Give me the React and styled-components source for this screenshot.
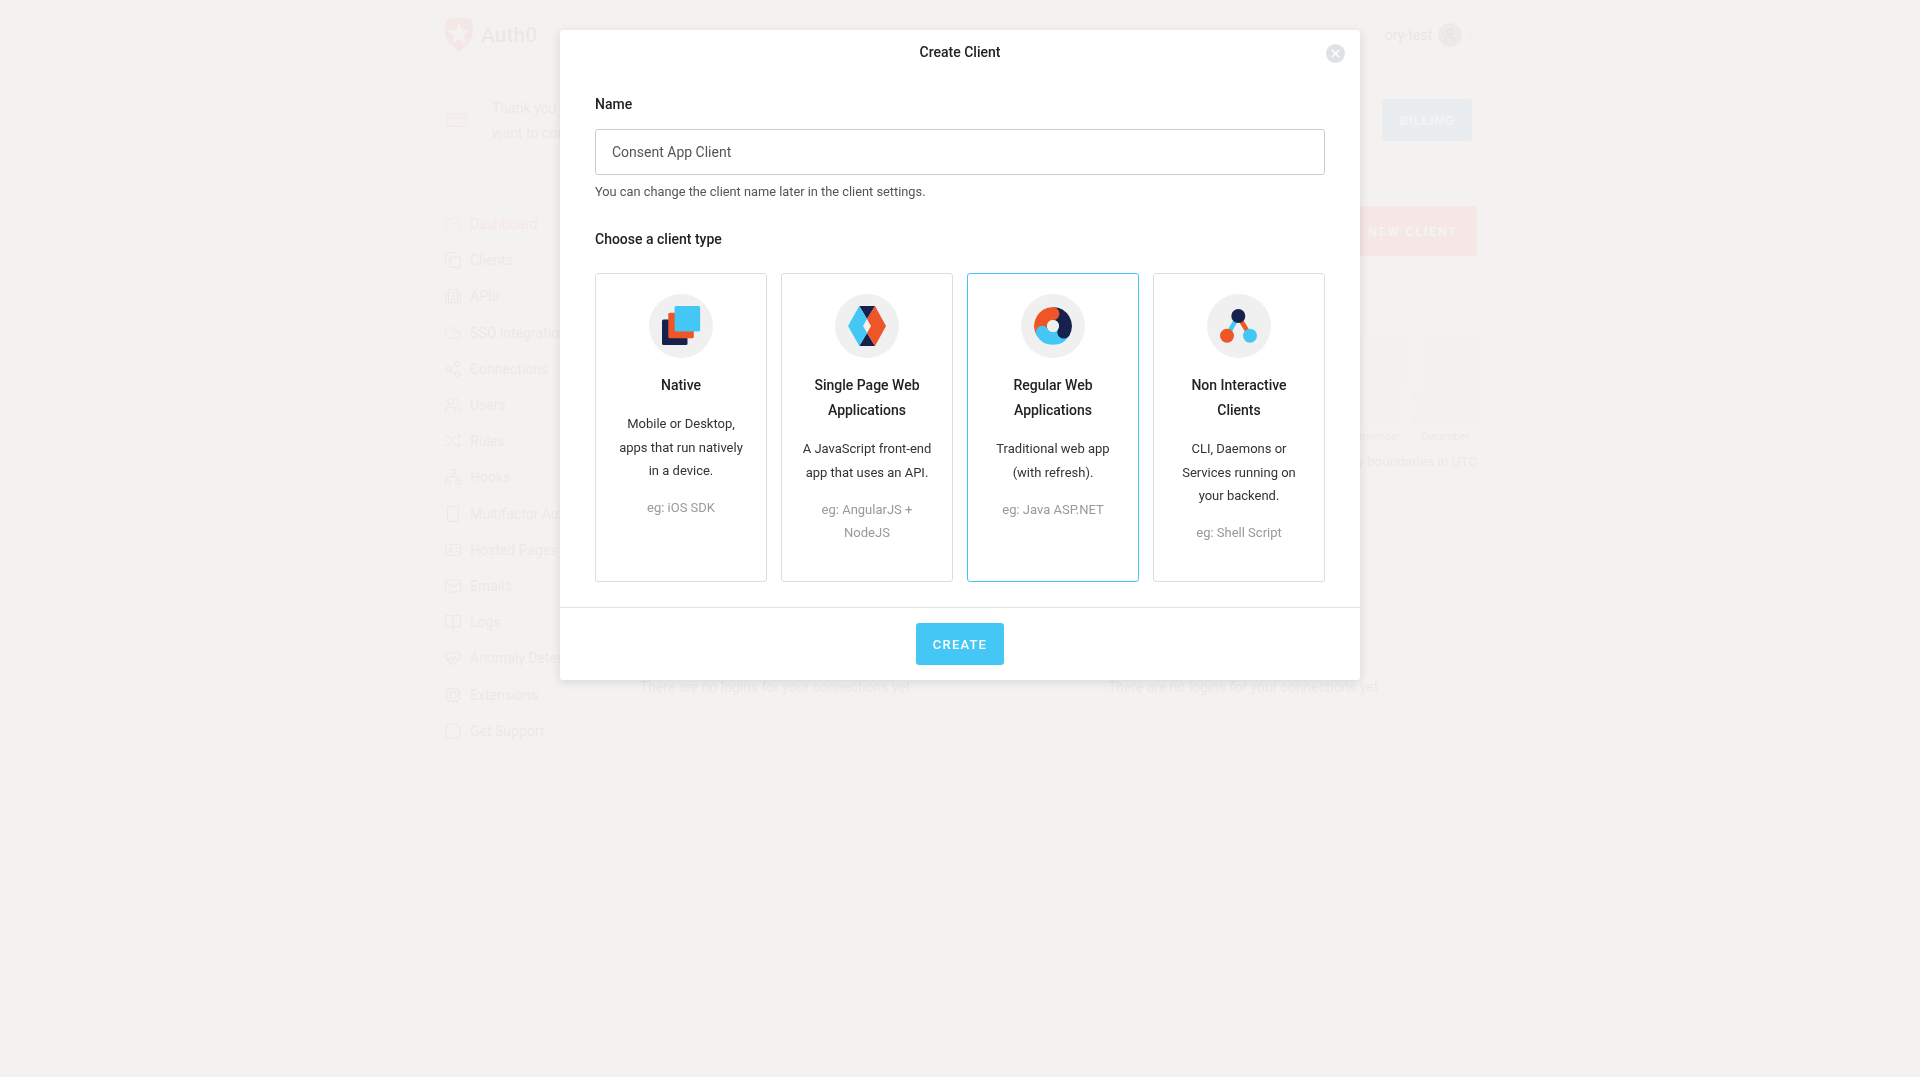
import React from 'react';
import styled, { createGlobalStyle } from 'styled-components';
import {
  Gauge, Copy, Building2, Cloud, Share2, Users, Shuffle, Network, Smartphone,
  IdCard, Mail, BookOpen, HeartPulse, Cpu, MessageCircle, CreditCard, ChevronDown, X, User,
} from 'lucide-react';

const NAVY = '#16214d';
const ORANGE = '#ee5527';
const BLUE = '#44c7f4';
const PAGE_RED = '#f5555f';
const PAGE_BLUE = '#6aa8d8';

const GlobalStyle = createGlobalStyle`
  html, body {
    margin: 0;
    height: 100%;
    overflow: hidden;
    background: #f3f2f0;
    font-family: Roboto, "Liberation Sans", sans-serif;
  }
  * { box-sizing: border-box; }
`;

const Page = styled.div`
  width: 1033px;
  margin-left: 444px;
  color: #444;
`;

const Header = styled.header`
  height: 70px;
  display: flex;
  align-items: center;
  justify-content: space-between;
`;

const Brand = styled.div`
  display: flex;
  align-items: center;
  gap: 7px;
  font-size: 21px;
  font-weight: 500;
  color: #666;
`;

const Account = styled.div`
  display: flex;
  align-items: center;
  gap: 6px;
  font-size: 14px;
`;

const Avatar = styled.div`
  width: 24px;
  height: 24px;
  border-radius: 50%;
  background: #888;
  color: #333;
  display: flex;
  align-items: center;
  justify-content: center;
`;

const AccountCaret = styled(ChevronDown)`
  margin-left: -3px;
`;

const Banner = styled.div`
  height: 50px;
  margin-top: 25px;
  display: flex;
  align-items: center;
  padding: 0 5px 0 2px;
  gap: 24px;
  color: ${PAGE_RED};
`;

const BannerText = styled.p`
  flex: 1;
  margin: 0;
  padding-top: 2px;
  font-size: 14px;
  line-height: 25px;
  color: #666;
`;

const BillingButton = styled.button`
  width: 90px;
  height: 42px;
  border: none;
  border-radius: 3px;
  background: ${PAGE_BLUE};
  color: #fff;
  font: 700 13px Roboto, sans-serif;
  letter-spacing: 1px;
`;

const Content = styled.div`
  display: flex;
  margin-top: 61px;
`;

const Sidebar = styled.nav`
  width: 195px;
  flex: none;
`;

const NavItem = styled.div`
  height: 36.2px;
  display: flex;
  align-items: center;
  gap: 8px;
  font-size: 14px;
  color: ${({ $active }) => ($active ? PAGE_RED : '#666')};
  white-space: nowrap;
`;

const Main = styled.main`
  flex: 1;
  min-width: 0;
`;

const TopRow = styled.div`
  display: flex;
  justify-content: flex-end;
`;

const NewClientButton = styled.button`
  width: 131px;
  height: 50px;
  padding: 0 0 0 3px;
  border: none;
  border-radius: 3px;
  background: ${PAGE_RED};
  color: #fff;
  font: 700 13px Roboto, sans-serif;
  letter-spacing: 1.5px;
`;

const ChartPanel = styled.section`
  margin-top: 64px;
  padding-top: 14px;
  border-top: 1px solid #ccc;
  height: 339px;
  display: flex;
  flex-direction: column;
  align-items: flex-end;
`;

const Heatmap = styled.div`
  display: grid;
  grid-template-columns: repeat(9, 11px);
  grid-auto-rows: 12px;
  gap: 1.3px 2.4px;
`;

const Cell = styled.span`
  background: ${({ $empty }) => ($empty ? 'transparent' : '#d9d9d9')};
`;

const Months = styled.div`
  width: 115px;
  display: flex;
  justify-content: flex-end;
  gap: 21px;
  margin: 3px 8px 0 0;
  font-size: 10.5px;
  line-height: 14px;
  color: #666;
`;

const ChartNote = styled.div`
  margin-top: 8px;
  font-size: 13.5px;
  line-height: 18px;
  color: #666;
`;

const LoginsPanel = styled.section`
  border-top: 1px solid #ccc;
  padding-top: 17px;
  display: grid;
  grid-template-columns: 468px 1fr;
`;

const EmptyNote = styled.p`
  margin: 0 0 0 1px;
  font-size: 13.9px;
  line-height: 20px;
  color: #666;
`;

const Overlay = styled.div`
  position: fixed;
  inset: 0;
  background: rgba(243, 242, 240, 0.93);
  display: flex;
  justify-content: center;
  align-items: flex-start;
  padding-top: 30px;
`;

const Modal = styled.div`
  position: relative;
  width: 800px;
  background: #fff;
  border-radius: 3px;
  box-shadow: 0 2px 10px rgba(0, 0, 0, 0.12);
  color: #222;
`;

const ModalHeader = styled.div`
  height: 64px;
  padding-top: 12px;
  text-align: center;
  font-size: 14px;
  font-weight: 500;
  line-height: 20px;
`;

const CloseButton = styled.button`
  position: absolute;
  top: 14px;
  right: 15px;
  width: 19px;
  height: 19px;
  padding: 0;
  border: none;
  border-radius: 50%;
  background: #dfe1e3;
  color: #fff;
  display: flex;
  align-items: center;
  justify-content: center;
`;

const ModalBody = styled.div`
  padding: 0 35px 25px;
`;

const Label = styled.div`
  font-size: 14px;
  font-weight: 500;
  line-height: 20px;
`;

const NameInput = styled.input`
  display: block;
  width: 100%;
  height: 46px;
  margin-top: 15px;
  padding: 0 16px;
  border: 1px solid #ccc;
  border-radius: 3px;
  outline: none;
  font: 400 14px Roboto, sans-serif;
  color: #555;
`;

const Hint = styled.p`
  margin: 8px 0 28px;
  font-size: 12.8px;
  line-height: 18px;
  color: #555;
`;

const CardGrid = styled.div`
  display: grid;
  grid-template-columns: repeat(4, 172px);
  gap: 14px;
  margin-top: 24px;
`;

const Card = styled.div`
  height: 309px;
  padding: 20px 20px 0;
  border: 1px solid ${({ $selected }) => ($selected ? BLUE : '#ddd')};
  border-radius: 3px;
  text-align: center;
`;

const IconDisc = styled.svg`
  display: block;
  width: 64px;
  height: 64px;
  margin: 0 auto;
`;

const CardTitle = styled.h3`
  margin: 14.5px -6px 0;
  font-size: 14px;
  font-weight: 500;
  line-height: 25px;
  color: #222;
`;

const CardText = styled.p`
  margin: 14.5px 0 0;
  font-size: 13px;
  line-height: 23.5px;
  color: #333;
`;

const CardExample = styled.p`
  margin: 13.5px 0 0;
  font-size: 13px;
  line-height: 23px;
  color: #999;
`;

const ModalFooter = styled.div`
  padding: 15px 0;
  border-top: 1px solid #e4e4e4;
  display: flex;
  justify-content: center;
`;

const CreateButton = styled.button`
  width: 88px;
  height: 42px;
  border: none;
  border-radius: 3px;
  background: ${BLUE};
  color: #fff;
  font: 500 13px Roboto, sans-serif;
  letter-spacing: 1.2px;
`;

const NativeIcon = () => (
  <>
    <rect x="13" y="25.5" width="25.5" height="25.5" rx="1.5" fill={NAVY} />
    <rect x="19.3" y="18.7" width="25.5" height="25.5" rx="1.5" fill={ORANGE} />
    <rect x="25.6" y="12" width="25.5" height="25.5" rx="1.5" fill={BLUE} />
  </>
);

const SpaIcon = () => (
  <>
    <polygon points="24.3,12 40,12 32,25 32,39 40,52 24.3,52 32,39 32,25" fill={NAVY} />
    <polygon points="13,32 24.3,12 32,25 28,32 32,39 24.3,52" fill={BLUE} />
    <polygon points="40,12 51,32 40,52 32,39 36,32 32,25" fill={ORANGE} />
  </>
);

const WebIcon = () => (
  <>
    <g fill="none" strokeWidth="12.8">
      <path d="M32 19.6A12.4 12.4 0 0 1 42.74 38.2" stroke={NAVY} />
      <path d="M42.74 38.2A12.4 12.4 0 0 1 21.26 38.2" stroke={BLUE} />
      <path d="M21.26 38.2A12.4 12.4 0 0 1 32 19.6" stroke={ORANGE} />
    </g>
    <circle cx="32" cy="19.6" r="6.4" fill={ORANGE} />
    <circle cx="42.74" cy="38.2" r="6.4" fill={NAVY} />
    <circle cx="21.26" cy="38.2" r="6.4" fill={BLUE} />
    <circle cx="32" cy="32" r="6" fill="#f0f0f0" />
  </>
);

const ServiceIcon = () => (
  <>
    <line x1="31.3" y1="22" x2="20" y2="41.7" stroke={BLUE} strokeWidth="4.5" />
    <line x1="31.3" y1="22" x2="43" y2="41.7" stroke={ORANGE} strokeWidth="4.5" />
    <circle cx="31.3" cy="22" r="7" fill={NAVY} />
    <circle cx="20" cy="41.7" r="7" fill={ORANGE} />
    <circle cx="43" cy="41.7" r="7" fill={BLUE} />
  </>
);

const clientTypes = [
  {
    title: 'Native',
    text: 'Mobile or Desktop, apps that run natively in a device.',
    example: 'eg: iOS SDK',
    Icon: NativeIcon,
  },
  {
    title: 'Single Page Web Applications',
    text: 'A JavaScript front-end app that uses an API.',
    example: 'eg: AngularJS + NodeJS',
    Icon: SpaIcon,
  },
  {
    title: 'Regular Web Applications',
    text: 'Traditional web app (with refresh).',
    example: 'eg: Java ASP.NET',
    Icon: WebIcon,
    selected: true,
  },
  {
    title: 'Non Interactive Clients',
    text: 'CLI, Daemons or Services running on your backend.',
    example: 'eg: Shell Script',
    Icon: ServiceIcon,
  },
];

const navItems = [
  ['Dashboard', Gauge],
  ['Clients', Copy],
  ['APIs', Building2],
  ['SSO Integrations', Cloud],
  ['Connections', Share2],
  ['Users', Users],
  ['Rules', Shuffle],
  ['Hooks', Network],
  ['Multifactor Auth', Smartphone],
  ['Hosted Pages', IdCard],
  ['Emails', Mail],
  ['Logs', BookOpen],
  ['Anomaly Detection', HeartPulse],
  ['Extensions', Cpu],
  ['Get Support', MessageCircle],
];

// gap between the two months of the calendar
const isEmptyCell = (row, col) => (col === 4 && row < 4) || (col === 3 && row >= 4);

const Logo = () => (
  <svg width="30" height="34" viewBox="0 0 30 34">
    <path
      fillRule="evenodd"
      fill={PAGE_RED}
      d="M8 0h14l5.5 1.5C29.5 9 31 18 24 26l-9 8-9-8C-1 18 .5 9 2.5 1.5zM15 4l-3 8.5H4l6.5 5-2.4 8.5L15 21l6.9 5-2.4-8.5 6.5-5h-8z"
    />
  </svg>
);

export default function App() {
  return (
    <>
      <GlobalStyle />
      <Page>
        <Header>
          <Brand><Logo />Auth0</Brand>
          <Account>
            ory-test
            <Avatar><User size={16} /></Avatar>
            <AccountCaret size={12} strokeWidth={1.5} />
          </Account>
        </Header>
        <Banner>
          <CreditCard size={22} strokeWidth={1.4} />
          <BannerText>Thank you for<br />want to continue</BannerText>
          <BillingButton>BILLING</BillingButton>
        </Banner>
        <Content>
          <Sidebar>
            {navItems.map(([label, Icon], i) => (
              <NavItem key={label} $active={i === 0}>
                <Icon size={18} strokeWidth={1.4} />
                {label}
              </NavItem>
            ))}
          </Sidebar>
          <Main>
            <TopRow><NewClientButton>NEW CLIENT</NewClientButton></TopRow>
            <ChartPanel>
              <Heatmap>
                {Array.from({ length: 63 }, (_, i) => (
                  <Cell key={i} $empty={isEmptyCell(Math.floor(i / 9), i % 9)} />
                ))}
              </Heatmap>
              <Months><span>November</span><span>December</span></Months>
              <ChartNote>Using day boundaries in UTC</ChartNote>
            </ChartPanel>
            <LoginsPanel>
              <EmptyNote>There are no logins for your connections yet</EmptyNote>
              <EmptyNote>There are no logins for your connections yet</EmptyNote>
            </LoginsPanel>
          </Main>
        </Content>
      </Page>
      <Overlay>
        <Modal>
          <ModalHeader>Create Client</ModalHeader>
          <CloseButton aria-label="Close"><X size={13} strokeWidth={3} /></CloseButton>
          <ModalBody>
            <Label>Name</Label>
            <NameInput defaultValue="Consent App Client" />
            <Hint>You can change the client name later in the client settings.</Hint>
            <Label>Choose a client type</Label>
            <CardGrid>
              {clientTypes.map(({ title, text, example, Icon, selected }) => (
                <Card key={title} $selected={selected}>
                  <IconDisc viewBox="0 0 64 64">
                    <circle cx="32" cy="32" r="32" fill="#f0f0f0" />
                    <Icon />
                  </IconDisc>
                  <CardTitle>{title}</CardTitle>
                  <CardText>{text}</CardText>
                  <CardExample>{example}</CardExample>
                </Card>
              ))}
            </CardGrid>
          </ModalBody>
          <ModalFooter><CreateButton>CREATE</CreateButton></ModalFooter>
        </Modal>
      </Overlay>
    </>
  );
}
